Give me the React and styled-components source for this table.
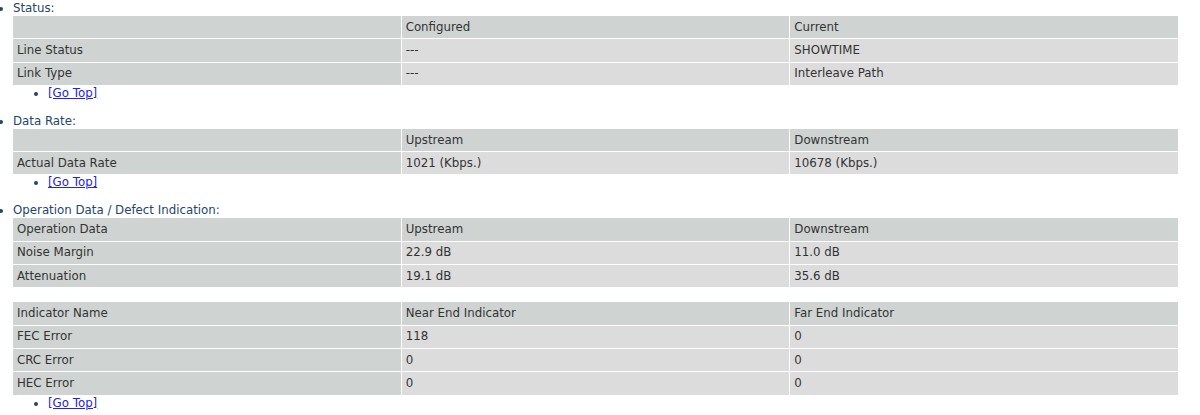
import React from "react";
import styled, { createGlobalStyle } from "styled-components";

const Global = createGlobalStyle`
  html, body { margin: 0; padding: 0; background: #fff; }
  body { font-family: "DejaVu Sans", Verdana, sans-serif; font-size: 11.8px; padding-top: 1px; }
`;

const Sections = styled.ul`
  margin: 0;
  padding: 0 0 0 13px;
  list-style: disc;
  width: 1166px;
`;

const Section = styled.li`
  color: #25456a;
  line-height: 15px;
  margin-bottom: ${(p) => p.$gap || 0}px;
`;

const Title = styled.div`
  height: 14px;
  line-height: 15px;
`;

const Table = styled.table`
  width: 1167px;
  border-collapse: separate;
  border-spacing: 1px;
  margin: 0 0 0 -1px;
  table-layout: fixed;
  margin-bottom: ${(p) => p.$after || 0}px;
`;

const Cell = styled.td`
  height: 22.3px;
  padding: 0 0 0 4px;
  color: #333;
  background: ${(p) => (p.$head ? "#cfd3d2" : "#dcdcdc")};
  font-size: 11.8px;
  vertical-align: middle;
  white-space: nowrap;
`;

const SubList = styled.ul`
  margin: 0;
  padding: 0 0 0 35px;
  list-style: disc;
  height: 15px;
`;

const SubItem = styled.li`
  color: #25456a;
  line-height: 15px;
`;

const Link = styled.a`
  color: #2222ee;
  text-decoration: underline;
`;

function DataTable({ rows, after }) {
  return (
    <Table $after={after}>
      <tbody>
        {rows.map((r, i) => (
          <tr key={i}>
            {r.map((c, j) => (
              <Cell key={j} $head={i === 0 || j === 0}>
                {c}
              </Cell>
            ))}
          </tr>
        ))}
      </tbody>
    </Table>
  );
}

function GoTop() {
  return (
    <SubList>
      <SubItem>
        <Link href="#">[Go Top]</Link>
      </SubItem>
    </SubList>
  );
}

export default function App() {
  return (
    <>
      <Global />
      <Sections>
        <Section $gap={13}>
          <Title>Status:</Title>
          <DataTable
            rows={[
              ["", "Configured", "Current"],
              ["Line Status", "---", "SHOWTIME"],
              ["Link Type", "---", "Interleave Path"],
            ]}
          />
          <GoTop />
        </Section>
        <Section $gap={13}>
          <Title>Data Rate:</Title>
          <DataTable
            rows={[
              ["", "Upstream", "Downstream"],
              ["Actual Data Rate", "1021 (Kbps.)", "10678 (Kbps.)"],
            ]}
          />
          <GoTop />
        </Section>
        <Section>
          <Title>Operation Data / Defect Indication:</Title>
          <DataTable
            after={13}
            rows={[
              ["Operation Data", "Upstream", "Downstream"],
              ["Noise Margin", "22.9 dB", "11.0 dB"],
              ["Attenuation", "19.1 dB", "35.6 dB"],
            ]}
          />
          <DataTable
            rows={[
              ["Indicator Name", "Near End Indicator", "Far End Indicator"],
              ["FEC Error", "118", "0"],
              ["CRC Error", "0", "0"],
              ["HEC Error", "0", "0"],
            ]}
          />
          <GoTop />
        </Section>
      </Sections>
    </>
  );
}
